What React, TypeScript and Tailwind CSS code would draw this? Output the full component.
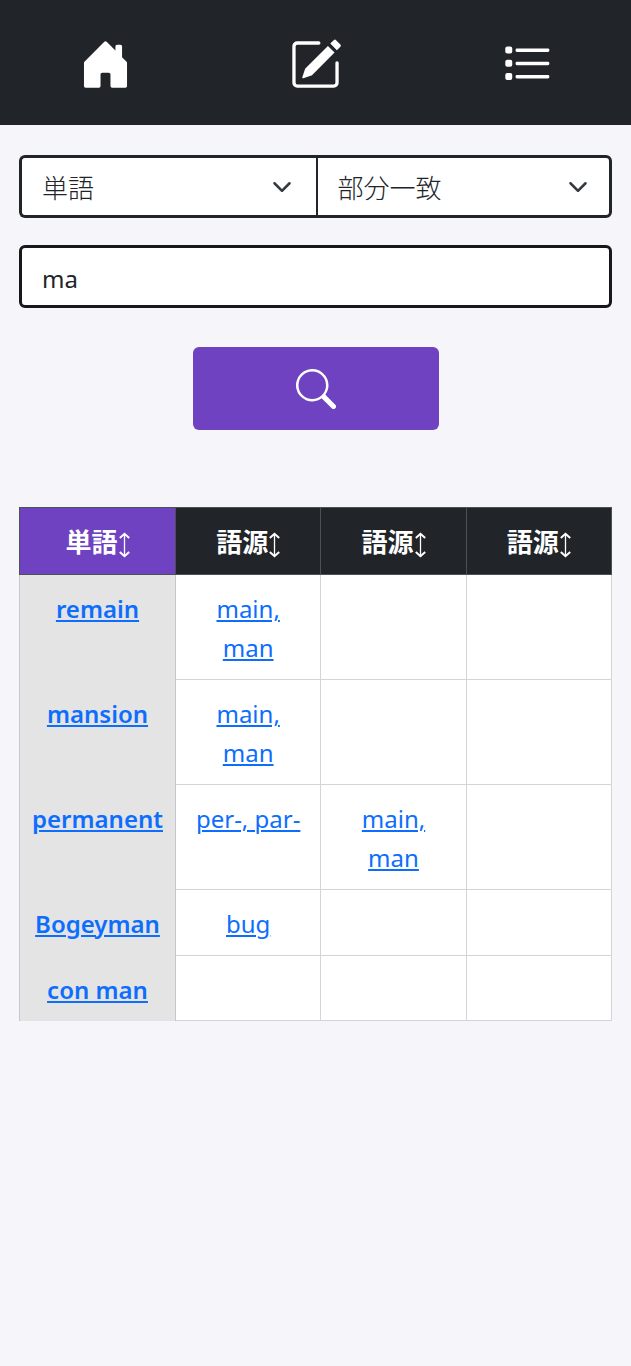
import { useState } from "react";
import type { ReactNode } from "react";
import { BsHouseDoorFill, BsPencilSquare, BsSearch, BsChevronDown } from "react-icons/bs";

type Row = { word: string; origins: string[] };

const rows: Row[] = [
  { word: "remain", origins: ["main, man", "", ""] },
  { word: "mansion", origins: ["main, man", "", ""] },
  { word: "permanent", origins: ["per-, par-", "main, man", ""] },
  { word: "Bogeyman", origins: ["bug", "", ""] },
  { word: "con man", origins: ["", "", ""] },
];

function ListIcon() {
  return (
    <svg viewBox="0 0 16 16" className="size-[53px]" fill="currentColor" aria-hidden="true">
      <rect x="1.9" y="2.6" width="2.1" height="2.1" rx="0.6" />
      <rect x="1.9" y="6.6" width="2.1" height="2.1" rx="0.6" />
      <rect x="1.9" y="10.6" width="2.1" height="2.1" rx="0.6" />
      <rect x="5" y="3.2" width="10.2" height="1" rx="0.4" />
      <rect x="5" y="7.2" width="10.2" height="1" rx="0.4" />
      <rect x="5" y="11.2" width="10.2" height="1" rx="0.4" />
    </svg>
  );
}

function SortIcon() {
  return (
    <svg viewBox="0 0 12 26" className="mt-1 h-[26px] w-3" fill="none" stroke="currentColor" aria-hidden="true">
      <path d="M6.5 2v22" strokeWidth="1.3" />
      <path d="M1.8 6 6.5 1.8 11.2 6M1.8 20l4.7 4.2 4.7-4.2" strokeWidth="2" />
    </svg>
  );
}

function NavLink({ label, children }: { label: string; children: ReactNode }) {
  return (
    <a href="#" aria-label={label} className="flex items-center justify-center text-white">
      {children}
    </a>
  );
}

function WordLink({ children }: { children: ReactNode }) {
  return (
    <a href="#" className="text-[#0d6efd] underline decoration-2 underline-offset-2">
      {children}
    </a>
  );
}

function Select({ label, options, className }: { label: string; options: string[]; className: string }) {
  return (
    <div className="relative flex-1">
      <select
        aria-label={label}
        className={`block h-[63px] w-full appearance-none border-[#212529] bg-white pt-1 pr-14 pl-5 font-light text-[#212529] ${className}`}
      >
        {options.map((o) => (
          <option key={o}>{o}</option>
        ))}
      </select>
      <BsChevronDown className="pointer-events-none absolute top-1/2 right-6 size-5 -translate-y-1/2 stroke-1 text-[#343a40]" />
    </div>
  );
}

function HeaderCell({ label, active }: { label: string; active?: boolean }) {
  return (
    <th
      scope="col"
      className={`border border-[#4d5154] p-0 ${active ? "w-[156px] bg-[#6f42c1]" : "bg-[#212529]"}`}
    >
      <button type="button" className="flex w-full items-center justify-center pt-[15px] pb-3 font-bold text-white">
        {label}
        <SortIcon />
      </button>
    </th>
  );
}

export default function App() {
  const [query, setQuery] = useState("ma");

  return (
    <div className="min-h-screen bg-[#f6f5fa] font-['Noto_Sans','Noto_Sans_CJK_JP',sans-serif] text-[26px] leading-[39px] text-[#212529]">
      <nav className="grid h-[125px] grid-cols-3 bg-[#212529] pt-1">
        <NavLink label="ホーム"><BsHouseDoorFill className="size-[53px]" /></NavLink>
        <NavLink label="編集"><BsPencilSquare className="size-[53px]" /></NavLink>
        <NavLink label="一覧"><ListIcon /></NavLink>
      </nav>

      <main className="px-[19px] pt-[30px]">
        <form onSubmit={(e) => e.preventDefault()}>
          <div className="flex">
            <Select label="検索対象" options={["単語", "語源"]} className="rounded-l-md border-y-3 border-l-3" />
            <Select label="検索方法" options={["部分一致", "完全一致"]} className="rounded-r-md border-3 border-l-2" />
          </div>
          <input
            aria-label="検索語"
            value={query}
            onChange={(e) => setQuery(e.target.value)}
            className="mt-[27px] block h-[63px] w-full rounded-md border-3 border-[#16181b] bg-white px-5 pt-1 text-2xl"
          />
          <button
            type="submit"
            aria-label="検索"
            className="mx-auto mt-[39px] flex h-[83px] w-[246px] items-center justify-center rounded-md bg-[#6f42c1] text-white"
          >
            <BsSearch className="size-10" />
          </button>
        </form>

        <table className="mt-[77px] w-full table-fixed border-collapse bg-white text-center">
          <thead>
            <tr>
              <HeaderCell label="単語" active />
              <HeaderCell label="語源" />
              <HeaderCell label="語源" />
              <HeaderCell label="語源" />
            </tr>
          </thead>
          <tbody className="text-2xl leading-[39px]">
            {rows.map((row) => (
              <tr key={row.word} className="align-top">
                <th scope="row" className="border-x border-[#c6c7c8] bg-[#e4e4e4] px-2 pt-[14px] pb-3 font-semibold">
                  <WordLink>{row.word}</WordLink>
                </th>
                {row.origins.map((origin, i) => (
                  <td key={i} className="border border-[#d3d4d5] px-[18px] pt-[14px] pb-3">
                    {origin && <WordLink>{origin}</WordLink>}
                  </td>
                ))}
              </tr>
            ))}
          </tbody>
        </table>
      </main>
    </div>
  );
}
